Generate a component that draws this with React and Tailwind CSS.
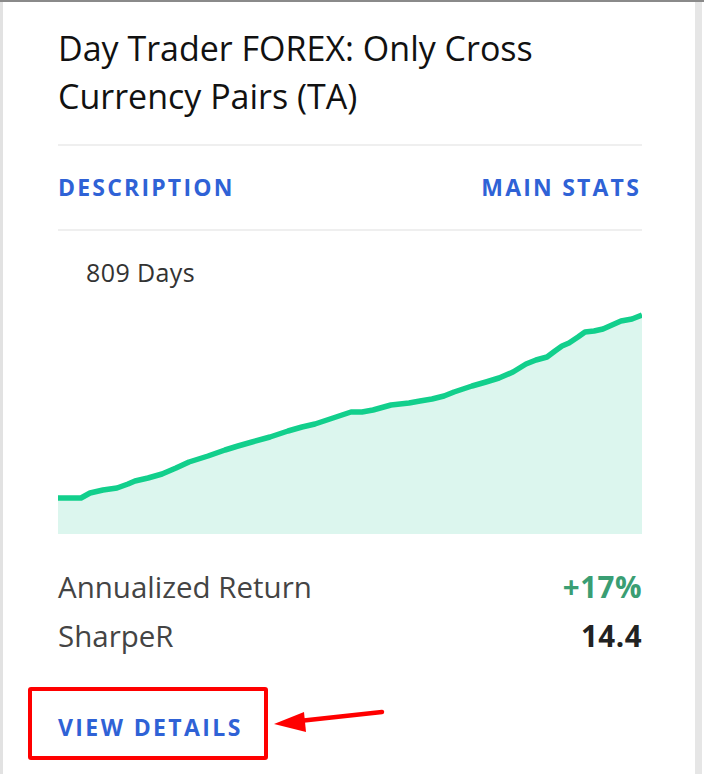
import React from "react";

const pts = [
  [0, 199], [23, 199], [32, 194], [45, 191], [59, 189], [70, 185], [77, 182], [90, 179], [104, 175], [118, 169], [131, 163], [150, 157], [167, 151], [180, 147], [194, 143], [212, 138], [230, 132], [244, 128], [257, 125], [275, 119], [293, 113], [304, 113], [315, 111], [333, 106], [351, 104], [362, 102], [374, 100], [386, 97], [396, 93], [405, 90], [414, 87], [428, 83], [441, 79], [455, 73], [468, 65], [478, 61], [489, 58], [497, 52], [504, 47], [511, 44], [520, 38], [527, 33], [536, 32], [545, 30], [554, 26], [563, 22], [574, 20], [584, 16],
];

function Chart() {
  const line = pts.map((p, i) => (i === 0 ? "M" : "L") + p[0] + " " + p[1]).join(" ");
  const area = line + " L584 235 L0 235 Z";
  return (
    <svg width="584" height="235" viewBox="0 0 584 235" className="block">
      <path d={area} fill="#dcf6ee" />
      <path d={line} fill="none" stroke="#12cf8c" strokeWidth="5.5" strokeLinejoin="round" strokeLinecap="butt" />
    </svg>
  );
}

export default function App() {
  return (
    <div
      className="relative w-[704px] h-[774px] bg-white border-t-2 border-[#8a8a8a] flex overflow-hidden"
      style={{ fontFamily: '"Open Sans", "Noto Sans", sans-serif' }}
    >
      <div className="w-[3px] bg-[#e2e2e2]" />
      <div className="flex-1 pl-[55px] pr-[53px] flex flex-col">
        <h1 className="mt-[22px] text-[34px] leading-[48px] text-[#111] font-normal whitespace-nowrap">
          Day Trader FOREX: Only Cross
          <br />
          Currency Pairs (TA)
        </h1>
        <div className="mt-[24px] h-[2px] bg-[#efefef]" />
        <div className="flex justify-between h-[83px] items-center text-[23px] font-bold tracking-[2.2px] text-[#2f62d6]">
          <span>DESCRIPTION</span>
          <span className="mr-[1px]">MAIN STATS</span>
        </div>
        <div className="h-[2px] bg-[#efefef]" />
        <div className="mt-[26px] ml-[28px] text-[25px] leading-[30px] font-medium text-[#333] tracking-[0.4px]">809 Days</div>
        <div className="mt-[12px]">
          <Chart />
        </div>
        <div className="mt-[33px] flex justify-between items-center text-[29.5px] leading-[40px]">
          <span className="text-[#444]">Annualized Return</span>
          <span className="font-bold text-[#3a9e73] tracking-[0.5px]">+17%</span>
        </div>
        <div className="mt-[9px] flex justify-between items-center text-[29.5px] leading-[40px]">
          <span className="text-[#444]">SharpeR</span>
          <span className="font-bold text-[#222] tracking-[0.5px]">14.4</span>
        </div>
        <div className="mt-[57px] text-[23px] leading-[28px] font-bold tracking-[2.4px] text-[#2f62d6]">VIEW DETAILS</div>
      </div>
      <div className="w-[7px] bg-[#e6e6e6]" />
      <div className="w-[2px] bg-white" />

      <div className="absolute left-[28px] top-[685px] w-[240px] h-[73px] border-[4px] border-[#ff0000] rounded-[3px]" />
      <svg className="absolute left-[270px] top-[700px]" width="120" height="36" viewBox="0 0 120 36">
        <line x1="112" y1="10" x2="20" y2="20" stroke="#ff0000" strokeWidth="4.5" strokeLinecap="round" />
        <polygon points="4,22 34,10 36,30" fill="#ff0000" />
      </svg>
    </div>
  );
}
